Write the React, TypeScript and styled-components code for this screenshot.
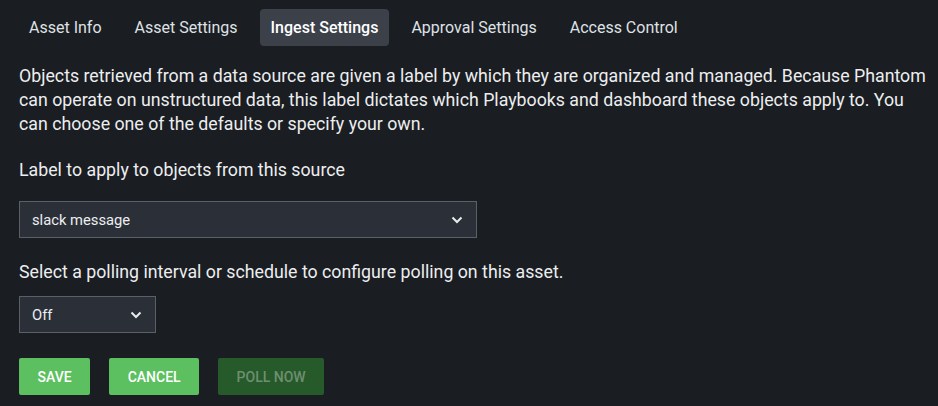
import styled, { createGlobalStyle } from "styled-components";

const GlobalStyle = createGlobalStyle`
  html, body {
    margin: 0;
    padding: 0;
    background: #1a1d21;
  }
  body {
    font-family: Roboto, "Liberation Sans", sans-serif;
    color: #eceef0;
  }
`;

const tabs = ["Asset Info", "Asset Settings", "Ingest Settings", "Approval Settings", "Access Control"];

function Chevron() {
  return (
    <svg width="12" height="8" viewBox="0 0 12 8">
      <path d="M1.5 1.5 L6 6 L10.5 1.5" stroke="#e8eaec" strokeWidth="2" fill="none" />
    </svg>
  );
}

function App() {
  return (
    <>
      <GlobalStyle />
      <Page>
        <TabBar>
          {tabs.map((t) => (
            <Tab key={t} $active={t === "Ingest Settings"}>
              {t}
            </Tab>
          ))}
        </TabBar>
        <Intro>
          Objects retrieved from a data source are given a label by which they are organized and managed. Because
          Phantom can operate on unstructured data, this label dictates which Playbooks and dashboard these objects
          apply to. You can choose one of the defaults or specify your own.
        </Intro>
        <Label $top={22}>Label to apply to objects from this source</Label>
        <Select $width={458} $top={19}>
          <span>slack message</span>
          <Chevron />
        </Select>
        <Label $top={22}>Select a polling interval or schedule to configure polling on this asset.</Label>
        <Select $width={137} $top={12}>
          <span>Off</span>
          <Chevron />
        </Select>
        <Actions>
          <ActionButton>Save</ActionButton>
          <ActionButton>Cancel</ActionButton>
          <ActionButton $disabled>Poll Now</ActionButton>
        </Actions>
      </Page>
    </>
  );
}

export default App;

const Page = styled.div`
  padding: 9px 12px 0 19px;
  display: flex;
  flex-direction: column;
  align-items: flex-start;
`;

const TabBar = styled.div`
  display: flex;
  gap: 11px;
  margin-left: -1px;
`;

const Tab = styled.div<{ $active?: boolean }>`
  height: 37px;
  padding: 0 11px;
  display: flex;
  align-items: center;
  font-size: 16px;
  border-radius: 4px;
  color: ${(p) => (p.$active ? "#ffffff" : "#dfe2e6")};
  font-weight: ${(p) => (p.$active ? 500 : 400)};
  background: ${(p) => (p.$active ? "#3b4049" : "transparent")};
`;

const Intro = styled.p`
  margin: 18px 0 0;
  font-size: 17.75px;
  line-height: 24px;
`;

const Label = styled.div<{ $top: number }>`
  margin-top: ${(p) => p.$top}px;
  font-size: 17.75px;
  line-height: 24px;
`;

const Select = styled.div<{ $width: number; $top: number }>`
  margin-top: ${(p) => p.$top}px;
  width: ${(p) => p.$width}px;
  height: 37px;
  box-sizing: border-box;
  border: 1px solid #5b6068;
  background: #2b3038;
  display: flex;
  align-items: center;
  justify-content: space-between;
  padding: 0 13px 0 12px;
  font-size: 14.75px;
  color: #eceef0;
`;

const Actions = styled.div`
  margin-top: 25px;
  display: flex;
  gap: 19px;
`;

const ActionButton = styled.button<{ $disabled?: boolean }>`
  height: 37px;
  padding: 0 18.5px;
  border: none;
  border-radius: 2px;
  font-family: Roboto, "Liberation Sans", sans-serif;
  font-size: 14px;
  font-weight: 500;
  text-transform: uppercase;
  background: ${(p) => (p.$disabled ? "#265a2b" : "#5cbf60")};
  color: ${(p) => (p.$disabled ? "#6e8f70" : "#ffffff")};
`;
